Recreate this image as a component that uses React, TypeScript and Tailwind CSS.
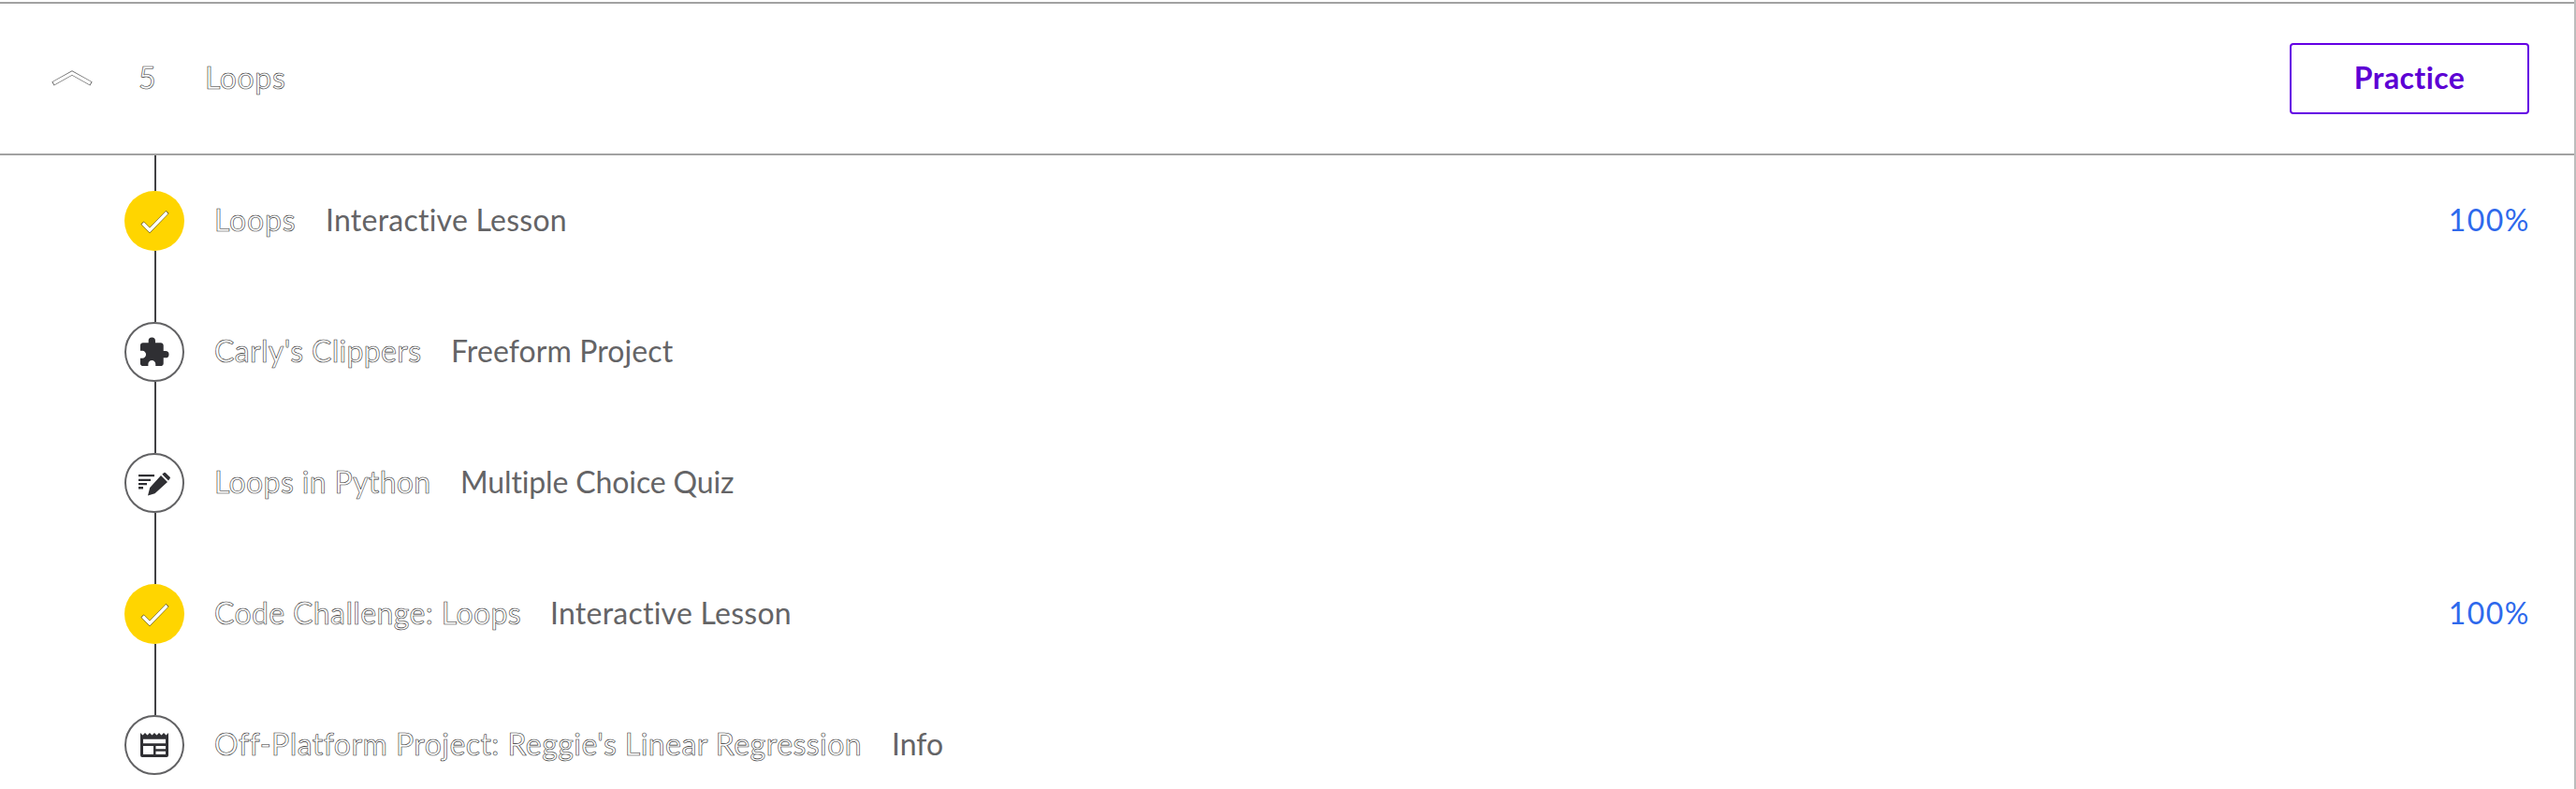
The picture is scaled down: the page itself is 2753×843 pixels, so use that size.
import React from "react";
import { MdExtension } from "react-icons/md";

type Kind = "check" | "puzzle" | "quiz" | "info";

interface Item {
  kind: Kind;
  title: string;
  titleClass: string;
  type: string;
  typeClass: string;
  score?: string;
}

const items: Item[] = [
  { kind: "check", title: "Loops", titleClass: "w-[119px] tracking-[0.8px]", type: "Interactive Lesson", typeClass: "tracking-[0.25px]", score: "100%" },
  { kind: "puzzle", title: "Carly's Clippers", titleClass: "w-[253px] tracking-[0.33px]", type: "Freeform Project", typeClass: "tracking-[0.1px]" },
  { kind: "quiz", title: "Loops in Python", titleClass: "w-[263px] tracking-[0.35px]", type: "Multiple Choice Quiz", typeClass: "tracking-[-0.13px]" },
  { kind: "check", title: "Code Challenge: Loops", titleClass: "w-[359px] tracking-[0.38px]", type: "Interactive Lesson", typeClass: "tracking-[0.25px]", score: "100%" },
  { kind: "info", title: "Off-Platform Project: Reggie's Linear Regression", titleClass: "w-[724px] tracking-[0.44px]", type: "Info", typeClass: "" },
];

const outline = "text-white [-webkit-text-stroke:0.6px_#303030]";

function Glyph({ kind }: { kind: Kind }) {
  if (kind === "check") {
    return (
      <svg width="64" height="64" viewBox="0 0 64 64" fill="none">
        <path d="M19 34 27 42 46 22.5" stroke="#5c5010" strokeWidth="4.4" />
        <path d="M19.5 34.5 27 42 45.5 23" stroke="#fff" strokeWidth="3.4" />
      </svg>
    );
  }
  if (kind === "puzzle") return <MdExtension size={35} color="#2f2f33" className="-ml-px" />;
  if (kind === "quiz") {
    return (
      <svg width="36" height="28" viewBox="0 0 36 28" fill="#2f2f33">
        <path d="M1 5h17v2.2H1zM1 9.7h13v2.2H1zM1 14h9v2.2H1zM1 18h5v2.4H1z" />
        <path d="M25 6 32 13 18.5 25.3 11 27.5 13.2 19zM26.3 4.8 28 3.2Q29 2.3 30 3.2L34.4 7.6Q35.4 8.6 34.4 9.6L33 11.6z" />
      </svg>
    );
  }
  return (
    <svg width="32" height="32" viewBox="0 0 32 32" fill="#2f2f33">
      <path
        fillRule="evenodd"
        d="M1 3 3.5 5.5 6 3 8.5 5.5 11 3 13.5 5.5 16 3 18.5 5.5 21 3 23.5 5.5 26 3 28.5 5.5 31 3V27Q31 29 29 29H3Q1 29 1 27zM4 9.7V14.3H28V9.7zM4 17V26H15V17zM17.5 17V20.3H28V17zM17.5 22.8V26H28V22.8z"
      />
    </svg>
  );
}

export default function App() {
  return (
    <main className="flex h-[843px] w-full flex-col overflow-hidden border-r-2 border-[#bcbcbc] bg-white pt-[2px] font-['Lato',sans-serif] text-[32px] leading-[48px] text-[#646466]">
      <header className="flex h-[164px] shrink-0 items-center border-y-2 border-[#a2a2a2] pr-12 pl-[53px]">
        <svg width="48" height="20" viewBox="0 0 48 20" fill="none">
          <path d="M3.5 15.5 24 4 44.5 15.5" stroke="#6c6c6c" strokeWidth="4.8" />
          <path d="M4.3 15 24 4 43.7 15" stroke="#fff" strokeWidth="3.2" />
        </svg>
        <span className={`mb-[2px] ml-[47px] w-[71px] ${outline}`}>5</span>
        <h2 className={`mb-[2px] tracking-[0.6px] ${outline}`}>Loops</h2>
        <button className="ml-auto h-[76px] w-64 rounded-[4px] border-2 border-[#6400e4] pb-[2px] font-bold tracking-[0.4px] text-[#5d00d4]">
          Practice
        </button>
      </header>
      <ul className="flex flex-col">
        {items.map((item, i) => (
          <li key={i} className="flex h-[140px] shrink-0 items-start pr-12 pl-[133px]">
            <div className="flex h-full w-16 shrink-0 flex-col items-center">
              <span className="ml-[2px] h-[38px] w-[2px] shrink-0 bg-[#414144]" />
              <span
                className={
                  item.kind === "check"
                    ? "flex size-16 shrink-0 items-center justify-center rounded-full bg-[#ffd500]"
                    : "flex size-16 shrink-0 items-center justify-center rounded-full border-2 border-[#626264] bg-white"
                }
              >
                <Glyph kind={item.kind} />
              </span>
              {i < items.length - 1 && <span className="ml-[2px] w-[2px] grow bg-[#414144]" />}
            </div>
            <div className="mt-[45px] ml-8 flex grow">
              <span className={`shrink-0 whitespace-nowrap ${outline} ${item.titleClass}`}>{item.title}</span>
              <span className={item.typeClass}>{item.type}</span>
              {item.score && <span className="-mr-px ml-auto tracking-[1.5px] text-[#2e69ec]">{item.score}</span>}
            </div>
          </li>
        ))}
      </ul>
    </main>
  );
}
